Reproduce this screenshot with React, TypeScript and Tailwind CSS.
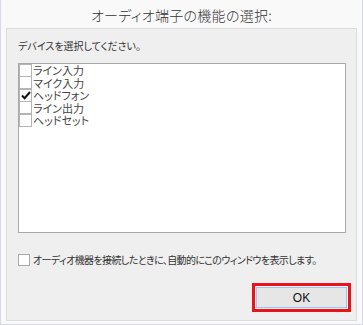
import React from "react";

const items = [
  { label: "ライン入力", checked: false },
  { label: "マイク入力", checked: false },
  { label: "ヘッドフォン", checked: true },
  { label: "ライン出力", checked: false },
  { label: "ヘッドセット", checked: false },
];

const jp = "font-['Noto_Sans_CJK_JP',sans-serif] [font-feature-settings:'palt']";

function Box({ checked }: { checked: boolean }) {
  return (
    <span className="relative flex h-[13px] w-[13px] shrink-0 items-center justify-center border border-[#b4b4b4] bg-white">
      {checked && (
        <svg width="10" height="9" viewBox="0 0 10 9" className="absolute left-[1px] top-[1px]">
          <path d="M1 4.5 L3.6 7.2 L9 1" fill="none" stroke="#111" strokeWidth="2" />
        </svg>
      )}
    </span>
  );
}

export default function App() {
  return (
    <div className={`flex h-[325px] w-[363px] flex-col border-x border-b border-[#d8d8e6] bg-[#f9f9f9] ${jp}`}>
      <div className="flex h-[28px] items-center justify-center pt-[3px] text-[14px] font-light tracking-[0.3px] text-[#333]">
        オーディオ端子の機能の選択:
      </div>
      <div className="mx-[5px] mb-[3px] flex flex-1 flex-col border border-[#dcdcdc] bg-[#efefef] pl-[11px] pr-[10px] pb-[8px]">
        <div className="pt-[11px] pb-[11px] text-[10px] leading-[12px] text-[#333]">デバイスを選択してください。</div>
        <div className="h-[170px] border border-[#a8a8a8] bg-white">
          {items.map((it) => (
            <div key={it.label} className="flex h-[12.5px] items-center gap-[1px] text-[11px] leading-[12px] text-[#444]">
              <Box checked={it.checked} />
              <span>{it.label}</span>
            </div>
          ))}
        </div>
        <div className="mt-[21px] flex items-center gap-[3px] whitespace-nowrap text-[10px] leading-[12px] tracking-[-0.6px] text-[#333]">
          <span className="h-[12px] w-[12px] shrink-0 border border-[#a8a8a8] bg-white" />
          <span>オーディオ機器を接続したときに、自動的にこのウィンドウを表示します。</span>
        </div>
        <div className="mt-auto -mr-[5px] flex justify-end">
          <div className="border-[3px] border-[#e8141c] p-[1px]">
            <button className="flex h-[21px] w-[91px] items-center justify-center border border-[#9cc6ef] bg-[#e6e6e6] font-['Liberation_Sans',sans-serif] text-[12px] text-[#111]">
              OK
            </button>
          </div>
        </div>
      </div>
    </div>
  );
}
